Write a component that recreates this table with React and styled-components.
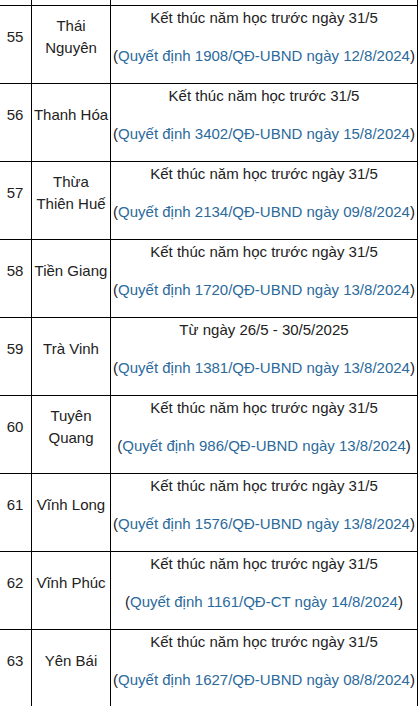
import React from "react";
import styled, { createGlobalStyle } from "styled-components";

const Global = createGlobalStyle`
  html, body { margin: 0; padding: 0; background: #fff; }
  body { font-family: "Liberation Sans", Arial, sans-serif; }
`;

const Page = styled.div`
  width: 420px;
  height: 706px;
  overflow: hidden;
  background: #fff;
`;

const Table = styled.table`
  border-collapse: collapse;
  table-layout: fixed;
  width: 419px;
  margin-left: -2px;
  margin-top: -73px;
  font-size: 15px;
  color: #222;
`;

const Cell = styled.td`
  border: 1px solid #000;
  padding: 1px 1px 0;
  height: ${(p) => (p.$spacer ? "76px" : "auto")};
  text-align: center;
  vertical-align: middle;
  overflow: hidden;
`;

const Para = styled.p`
  margin: 0 0 16px;
  line-height: 22px;
  white-space: ${(p) => (p.$nowrap ? "nowrap" : "normal")};
`;

const Link = styled.a`
  color: #2b6a9c;
  text-decoration: none;
`;

const rows = [
  ["55", "Thái Nguyên", "Kết thúc năm học trước ngày 31/5", "Quyết định 1908/QĐ-UBND ngày 12/8/2024"],
  ["56", "Thanh Hóa", "Kết thúc năm học trước 31/5", "Quyết định 3402/QĐ-UBND ngày 15/8/2024"],
  ["57", "Thừa Thiên Huế", "Kết thúc năm học trước ngày 31/5", "Quyết định 2134/QĐ-UBND ngày 09/8/2024"],
  ["58", "Tiền Giang", "Kết thúc năm học trước ngày 31/5", "Quyết định 1720/QĐ-UBND ngày 13/8/2024"],
  ["59", "Trà Vinh", "Từ ngày 26/5 - 30/5/2025", "Quyết định 1381/QĐ-UBND ngày 13/8/2024"],
  ["60", "Tuyên Quang", "Kết thúc năm học trước ngày 31/5", "Quyết định 986/QĐ-UBND ngày 13/8/2024"],
  ["61", "Vĩnh Long", "Kết thúc năm học trước ngày 31/5", "Quyết định 1576/QĐ-UBND ngày 13/8/2024"],
  ["62", "Vĩnh Phúc", "Kết thúc năm học trước ngày 31/5", "Quyết định 1161/QĐ-CT ngày 14/8/2024"],
  ["63", "Yên Bái", "Kết thúc năm học trước ngày 31/5", "Quyết định 1627/QĐ-UBND ngày 08/8/2024"],
];

export default function App() {
  return (
    <Page>
      <Global />
      <Table>
        <colgroup>
          <col style={{ width: 33 }} />
          <col style={{ width: 79 }} />
          <col style={{ width: 307 }} />
        </colgroup>
        <tbody>
          <tr>
            <Cell $spacer />
            <Cell $spacer />
            <Cell $spacer />
          </tr>
          {rows.map(([n, name, time, decision]) => (
            <tr key={n}>
              <Cell>
                <Para>{n}</Para>
              </Cell>
              <Cell>
                <Para>{name}</Para>
              </Cell>
              <Cell>
                <Para>{time}</Para>
                <Para $nowrap>
                  (<Link href="#">{decision}</Link>)
                </Para>
              </Cell>
            </tr>
          ))}
        </tbody>
      </Table>
    </Page>
  );
}
